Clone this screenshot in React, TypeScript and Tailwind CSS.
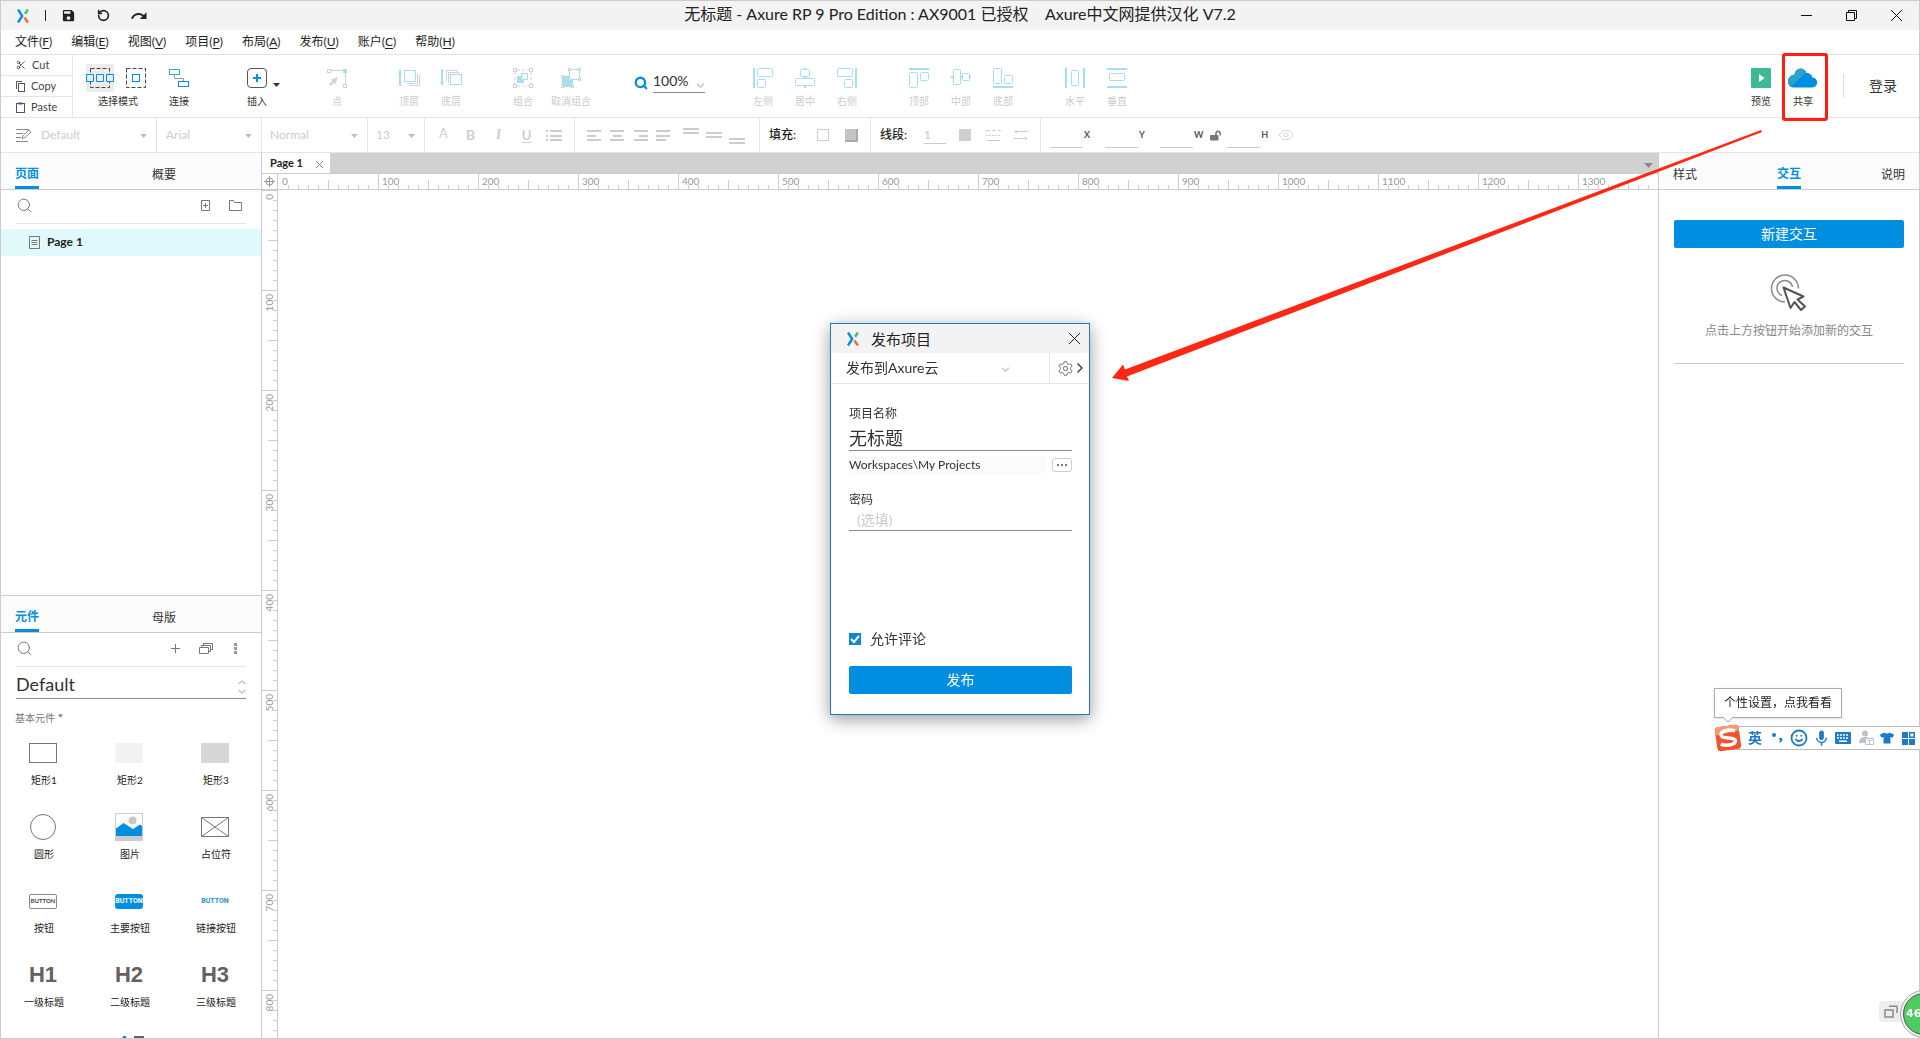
import React from "react";
import { Search, Scissors, RotateCcw, Settings, Smile, Eye } from "lucide-react";
import { MdSave, MdRedo, MdMic } from "react-icons/md";
import { FaLockOpen, FaTshirt } from "react-icons/fa";

const BLUE = "#008fe0";
const PALE = "#a8def2";
const GREY = "#d2d2d2";

function Logo({ className }: { className?: string }) {
  return (
    <svg width="12" height="14" viewBox="0 0 12 14" fill="none" className={className}>
      <path d="M1 .5 L5.2 7 L1 13.5" stroke={BLUE} strokeWidth="2.4" />
      <path d="M11 .5 L8 4.8" stroke="#4fc06a" strokeWidth="2.6" />
      <path d="M7.4 8.6 L11 13.5" stroke="#f0703c" strokeWidth="2.6" />
    </svg>
  );
}

function Caret({ className, color = "#bdbdbd" }: { className?: string; color?: string }) {
  return (
    <svg width="7" height="4" viewBox="0 0 7 4" className={className}>
      <path d="M0 0h7L3.5 4z" fill={color} />
    </svg>
  );
}

function Chevron({ className }: { className?: string }) {
  return (
    <svg width="9" height="5" viewBox="0 0 9 5" fill="none" className={className}>
      <path d="M1 .7 L4.5 4 L8 .7" stroke="#c4c4c4" strokeWidth="1.3" />
    </svg>
  );
}

function Icon20({ children, w = 20 }: { children: React.ReactNode; w?: number }) {
  return (
    <svg width={w} height="20" viewBox={`0 0 ${w} 20`} fill="none">
      {children}
    </svg>
  );
}

const icons = {
  connect: (
    <Icon20>
      <rect x=".5" y="1.5" width="10" height="5" stroke="#3ab0c8" />
      <rect x="9.5" y="13.5" width="10" height="5" stroke={BLUE} />
      <path d="M5.5 7v3.500h9V13" stroke="#999" />
    </Icon20>
  ),
  insert: (
    <Icon20>
      <rect x=".5" y=".5" width="19" height="19" rx="3.500" stroke="#555" />
      <path d="M10 6v8M6 10h8" stroke={BLUE} strokeWidth="2" />
    </Icon20>
  ),
  point: (
    <Icon20>
      <path d="M4 2.500H16M18.500 5v11" stroke={GREY} />
      <rect x=".5" y="1.500" width="3" height="3" stroke={GREY} />
      <rect x="16" y="1" width="4" height="4" fill={PALE} />
      <rect x="16.500" y="16.500" width="3" height="3" stroke={GREY} />
      <path d="M11 9L3 12l2.500 1L2 16.500 3.500 18 7 14.500l1 2.500z" fill={GREY} />
    </Icon20>
  ),
  front: (
    <Icon20 w={22}>
      <path d="M2 18V4" stroke={PALE} strokeWidth="2" />
      <path d="M0 5l2-4 2 4z" fill={PALE} />
      <rect x="6.500" y="2.500" width="11" height="11" stroke={PALE} />
      <path d="M19.500 5v10.500H9M21.500 7v10.500H11" stroke={GREY} />
    </Icon20>
  ),
  back: (
    <Icon20 w={22}>
      <path d="M2 1v14" stroke={PALE} strokeWidth="2" />
      <path d="M0 14l2 4 2-4z" fill={PALE} />
      <rect x="10.500" y="6.500" width="11" height="10" stroke={PALE} />
      <path d="M9 14.500H8.500V4.500H19V6M7 12.500H6.500V2.500H17V4" stroke={GREY} />
    </Icon20>
  ),
  group: (
    <Icon20>
      <path d="M4 2h12M4 18h12M2 4v12M18 4v12" stroke={GREY} strokeDasharray="3 2" />
      <rect x=".5" y=".5" width="3" height="3" stroke={GREY} />
      <rect x="16.500" y=".5" width="3" height="3" stroke={GREY} />
      <rect x=".5" y="16.500" width="3" height="3" stroke={GREY} />
      <rect x="16.500" y="16.500" width="3" height="3" stroke={GREY} />
      <rect x="4" y="8" width="7" height="7" fill={PALE} />
      <rect x="8.500" y="5.500" width="6" height="6" fill="#fff" stroke={PALE} />
    </Icon20>
  ),
  ungroup: (
    <Icon20>
      <rect x="1" y="8" width="11" height="11" fill={PALE} />
      <rect x="8.500" y="1.500" width="10" height="10" fill="#fff" stroke={PALE} />
      {[[7, 0], [17, 0], [17, 10], [7, 10], [0, 7], [0, 17], [10, 17]].map(([x, y]) => (
        <rect key={`${x}-${y}`} x={x + 0.5} y={y + 0.5} width="2" height="2" fill="#fff" stroke={GREY} />
      ))}
    </Icon20>
  ),
  left: (
    <Icon20>
      <path d="M1 0v20" stroke={PALE} strokeWidth="2" />
      <rect x="4.500" y=".5" width="15" height="8" rx="1" stroke={PALE} />
      <rect x="4.500" y="11.500" width="8" height="8" rx="1" stroke={PALE} />
    </Icon20>
  ),
  center: (
    <Icon20>
      <path d="M10 -1v3M10 8v3M10 18v2" stroke={PALE} strokeWidth="2" />
      <rect x="5.500" y="1.500" width="9" height="7" rx="1" stroke={PALE} />
      <rect x=".5" y="10.500" width="19" height="7" rx="1" stroke={PALE} />
    </Icon20>
  ),
  right: (
    <Icon20>
      <path d="M19 0v20" stroke={PALE} strokeWidth="2" />
      <rect x=".5" y=".5" width="15" height="8" rx="1" stroke={PALE} />
      <rect x="7.500" y="11.500" width="8" height="8" rx="1" stroke={PALE} />
    </Icon20>
  ),
  top: (
    <Icon20>
      <path d="M0 1h20" stroke={PALE} strokeWidth="2" />
      <rect x=".5" y="4.500" width="8" height="15" rx="1" stroke={PALE} />
      <rect x="11.500" y="4.500" width="8" height="8" rx="1" stroke={PALE} />
    </Icon20>
  ),
  middle: (
    <Icon20>
      <path d="M0 9h2M9 9h3M18 9h2" stroke={PALE} strokeWidth="2" />
      <rect x="2.500" y="1.500" width="7" height="15" rx="1" stroke={PALE} />
      <rect x="11.500" y="5.500" width="7" height="7" rx="1" stroke={PALE} />
    </Icon20>
  ),
  bottom: (
    <Icon20>
      <path d="M0 19h20" stroke={PALE} strokeWidth="2" />
      <rect x=".5" y=".5" width="8" height="15" rx="1" stroke={PALE} />
      <rect x="11.500" y="7.500" width="8" height="8" rx="1" stroke={PALE} />
    </Icon20>
  ),
  horizontal: (
    <Icon20>
      <path d="M1 0v20M19 0v20" stroke={PALE} strokeWidth="2" />
      <rect x="6.500" y="2.500" width="7" height="15" rx="1" stroke={PALE} />
    </Icon20>
  ),
  vertical: (
    <Icon20>
      <path d="M0 1h20M0 19h20" stroke={PALE} strokeWidth="2" />
      <rect x="2.500" y="5.500" width="15" height="7" rx="1" stroke={PALE} />
    </Icon20>
  ),
  preview: (
    <Icon20>
      <rect width="20" height="20" rx="1" fill="#3fb896" />
      <path d="M8 6v8l5.500-4z" fill="#fff" />
    </Icon20>
  ),
  share: (
    <Icon20 w={30}>
      <path
        d="M5 19.500a5.500 5.500 0 0 1-5-5.500A7 7 0 0 1 6.500 6.500 7 7 0 0 1 12.500.5a6.500 6.500 0 0 1 6 4.500c4 0 5.500 2.500 5.700 4.500a5 5 0 0 1 0 10z"
        fill={BLUE}
      />
      <path d="M3 18.500A6 6 0 0 1 0 13.500a7 7 0 0 1 6.500-7A7 7 0 0 1 12.500.5a6.500 6.500 0 0 1 5.500 4.200z" fill="#2ba3cb" />
    </Icon20>
  ),
};

function Tool({ icon, label, on, children, className = "w-[42px]" }: { icon: React.ReactNode; label: string; on?: boolean; children?: React.ReactNode; className?: string }) {
  return (
    <button className={`relative flex shrink-0 flex-col items-center pt-[13px] ${on ? "text-[#333]" : "text-[#ccc]"} ${className}`}>
      {icon}
      <span className="mt-[5px] text-[10px] leading-4 whitespace-nowrap">{label}</span>
      {children}
    </button>
  );
}

function TitleBar() {
  return (
    <header className="grid h-[29px] shrink-0 grid-cols-[1fr_auto_1fr] items-center bg-[#f3f3f3]">
      <div className="flex items-center pl-4 text-[#222]">
        <Logo />
        <span className="ml-4 h-[11px] w-px bg-[#222]" />
        <button aria-label="保存" className="ml-[15px]"><MdSave size={15} /></button>
        <button aria-label="撤销" className="ml-[21px]"><RotateCcw size={13} strokeWidth={3} /></button>
        <button aria-label="重做" className="ml-[20px]"><MdRedo size={18} /></button>
      </div>
      <h1 className="pb-1 text-[16px] leading-6 whitespace-pre text-[#222]">无标题 - Axure RP 9 Pro Edition : AX9001 已授权    Axure中文网提供汉化 V7.2</h1>
      <div className="flex justify-end text-[#111]">
        <button aria-label="最小化" className="flex h-7 w-[45px] items-center justify-center">
          <svg width="11" height="11"><path d="M0 5.500h11" stroke="currentColor" /></svg>
        </button>
        <button aria-label="还原" className="flex h-7 w-[45px] items-center justify-center">
          <svg width="11" height="11" fill="none" stroke="currentColor"><path d="M.5 2.500h8v8h-8zM2.500 2.500v-2h8v8h-2" /></svg>
        </button>
        <button aria-label="关闭" className="flex h-7 w-[45px] items-center justify-center">
          <svg width="11" height="11" stroke="currentColor"><path d="M0 0l11 11M11 0L0 11" /></svg>
        </button>
      </div>
    </header>
  );
}

const menus = [["文件", "F"], ["编辑", "E"], ["视图", "V"], ["项目", "P"], ["布局", "A"], ["发布", "U"], ["账户", "C"], ["帮助", "H"]];

function MenuBar() {
  return (
    <nav className="flex h-[25px] shrink-0 items-center gap-[19px] border-b border-[#e4e4e4] pl-[14px] text-[12px] leading-5 text-[#222]">
      {menus.map(([name, key]) => (
        <button key={key}>{name}(<u className="underline-offset-2">{key}</u>)</button>
      ))}
    </nav>
  );
}

function Toolbar() {
  const clip = "flex h-[21px] items-center gap-[6px] border-b border-[#e4e4e4] pl-[15px] last:border-b-0 last:h-5";
  return (
    <div className="flex h-[63px] shrink-0 border-b border-[#e4e4e4]">
      <div className="flex w-[72px] shrink-0 flex-col border-r border-[#e4e4e4] text-[11px] leading-4 text-[#444]">
        <button className={clip}><Scissors size={10} strokeWidth={2} />Cut</button>
        <button className={clip}>
          <svg width="9" height="11" fill="none" stroke="#555"><rect x="2.500" y="2.500" width="6" height="8" /><path d="M.5 8V.5H6" /></svg>
          Copy
        </button>
        <button className={clip}>
          <svg width="9" height="11" fill="none" stroke="#555"><rect x=".5" y="1.500" width="8" height="9" /><path d="M2.500 1.500h4" strokeWidth="2" /></svg>
          Paste
        </button>
      </div>
      <div className="ml-3 flex w-[66px] shrink-0 flex-col items-center pt-[9px] text-[#333]">
        <div className="flex gap-2">
          <button aria-label="相交选择" className="flex size-7 items-center justify-center bg-[#ececec]">
            <svg width="28" height="20" fill="none">
              <rect x="4.500" y=".5" width="19" height="19" stroke="#444" strokeDasharray="4 2" />
              <path d="M.5 6.500h7v7h-7zM10.500 6.500h7v7h-7zM20.500 6.500h7v7h-7z" fill="#ececec" stroke={BLUE} />
            </svg>
          </button>
          <button aria-label="包含选择" className="flex size-7 items-center justify-center">
            <svg width="20" height="20" fill="none">
              <rect x=".5" y=".5" width="19" height="19" stroke="#444" strokeDasharray="4 2" />
              <rect x="6.500" y="6.500" width="7" height="7" stroke={BLUE} />
            </svg>
          </button>
        </div>
        <span className="mt-px text-[10px] leading-4">选择模式</span>
      </div>
      <Tool icon={icons.connect} label="连接" on className="ml-[7px] w-[42px]" />
      <Tool icon={icons.insert} label="插入" on className="ml-9 w-[42px]">
        <Caret color="#333" className="absolute top-7 right-[-2px]" />
      </Tool>
      <Tool icon={icons.point} label="点" className="ml-[38px] w-[42px]" />
      <div className="ml-[30px] flex"><Tool icon={icons.front} label="顶层" /><Tool icon={icons.back} label="底层" /></div>
      <div className="ml-[27px] flex">
        <Tool icon={icons.group} label="组合" className="w-12" />
        <Tool icon={icons.ungroup} label="取消组合" className="w-12" />
      </div>
      <label className="ml-[39px] flex h-[38px] items-end gap-[5px]">
        <Search size={14} strokeWidth={4} color={BLUE} className="mb-[3px]" />
        <span className="relative flex border-b border-[#888]">
          <input aria-label="缩放" defaultValue="100%" className="w-[52px] bg-transparent text-[14px] leading-[22px] text-[#333] outline-none" />
          <Chevron className="absolute right-0 bottom-1" />
        </span>
      </label>
      <div className="ml-[37px] flex"><Tool icon={icons.left} label="左侧" /><Tool icon={icons.center} label="居中" /><Tool icon={icons.right} label="右侧" /></div>
      <div className="ml-[30px] flex"><Tool icon={icons.top} label="顶部" /><Tool icon={icons.middle} label="中部" /><Tool icon={icons.bottom} label="底部" /></div>
      <div className="ml-[30px] flex"><Tool icon={icons.horizontal} label="水平" /><Tool icon={icons.vertical} label="垂直" /></div>
      <div className="ml-auto flex">
        <Tool icon={icons.preview} label="预览" on />
        <Tool icon={icons.share} label="共享" on>
          <span className="absolute -top-[2px] left-0 h-[68px] w-[46px] rounded-[3px] border-3 border-[#ff1e10]" />
        </Tool>
        <span className="mt-[19px] ml-[19px] h-6 w-px bg-[#ddd]" />
        <button className="mr-[22px] ml-[25px] pb-px text-[14px] leading-5 text-[#333]">登录</button>
      </div>
    </div>
  );
}

function StyleSelect({ label, value, className }: { label: string; value: string; className: string }) {
  return (
    <div className={`relative flex shrink-0 items-center border-r border-[#e4e4e4] ${className}`}>
      <select aria-label={label} className="w-full appearance-none bg-transparent text-[12px] leading-5 text-[#ccc] outline-none">
        <option>{value}</option>
      </select>
      <Caret className="pointer-events-none absolute top-4 right-[9px]" />
    </div>
  );
}

function Lines({ rows, h = 11, w = 14 }: { rows: number[][]; h?: number; w?: number }) {
  return (
    <svg width={w} height={h} shapeRendering="crispEdges">
      {rows.map(([x, y, len]) => (
        <rect key={y} x={x} y={y} width={len} height="1.500" fill="#ccc" />
      ))}
    </svg>
  );
}

function Coord({ name }: { name: string }) {
  return (
    <label className="flex items-center text-[9px] leading-4 font-bold text-[#555]">
      <input className="mt-2 h-[18px] w-[33px] border-b border-[#ccc] bg-transparent outline-none" />
      <span className="ml-px">{name}</span>
    </label>
  );
}

function FormatBar() {
  return (
    <div className="flex h-[35px] shrink-0 border-b border-[#e4e4e4]">
      <svg width="16" height="14" fill="none" stroke="#8a8a8a" className="mt-[10px] ml-[15px] shrink-0">
        <path d="M0 1.500h13M0 5.500h7M0 9.500h5M0 13.500h12M6 10.500l1-3L13 2l2 2-6 5.500z" />
      </svg>
      <StyleSelect label="样式" value="Default" className="w-[125px] pl-[9px]" />
      <StyleSelect label="字体" value="Arial" className="w-[105px] pl-[9px]" />
      <StyleSelect label="字形" value="Normal" className="w-[106px] pl-2" />
      <StyleSelect label="字号" value="13" className="w-[57px] pl-2" />
      <div className="flex w-[150px] shrink-0 items-center border-r border-[#e4e4e4] pl-[13px] text-[14px] leading-5 text-[#d0d0d0]">
        <button className="mb-1 w-[11px] text-[13px]">A</button>
        <button className="ml-4 w-[11px] font-bold">B</button>
        <button className="ml-[17px] w-[11px] font-serif font-bold italic">I</button>
        <button className="ml-[17px] w-[11px] text-[13px] font-bold underline underline-offset-2">U</button>
        <button aria-label="项目符号" className="ml-[14px]">
          <Lines w={16} rows={[[0, 0, 2], [0, 5, 2], [0, 9, 2]]} />
        </button>
        <span className="-ml-3"><Lines w={12} rows={[[0, 0, 12], [0, 5, 12], [0, 9, 12]]} /></span>
      </div>
      <div className="flex w-[185px] shrink-0 items-center border-r border-[#e4e4e4] pl-3">
        <button aria-label="左对齐"><Lines rows={[[0, 0, 14], [0, 5, 9], [0, 9, 14]]} /></button>
        <button aria-label="居中对齐" className="ml-[9px]"><Lines rows={[[0, 0, 14], [3, 5, 9], [0, 9, 14]]} /></button>
        <button aria-label="右对齐" className="ml-[10px]"><Lines rows={[[0, 0, 14], [5, 5, 9], [0, 9, 14]]} /></button>
        <button aria-label="两端对齐" className="ml-2"><Lines rows={[[0, 0, 14], [0, 5, 14], [0, 9, 10]]} /></button>
        <button aria-label="顶端" className="mb-2 ml-[13px]"><Lines w={16} h={6} rows={[[0, 0, 16], [0, 4, 16]]} /></button>
        <button aria-label="中间" className="ml-[7px]"><Lines w={16} h={6} rows={[[0, 0, 16], [0, 4, 16]]} /></button>
        <button aria-label="底端" className="mt-3 ml-[7px]"><Lines w={16} h={6} rows={[[0, 0, 16], [0, 4, 16]]} /></button>
      </div>
      <div className="flex w-[111px] shrink-0 items-center border-r border-[#e4e4e4] pl-[9px] text-[12px] leading-5 font-medium text-[#222]">
        <span className="w-12 whitespace-nowrap">填充:</span>
        <button aria-label="填充颜色" className="size-3 border border-[#ccc]" />
        <button aria-label="阴影" className="ml-4 size-[13px] border-r-2 border-b-2 border-[#aaa] bg-[#c4c4c4]" />
      </div>
      <div className="flex w-[170px] shrink-0 items-center border-r border-[#e4e4e4] pl-[9px] text-[12px] leading-5 font-medium text-[#222]">
        <label htmlFor="line-width" className="w-11 whitespace-nowrap">线段:</label>
        <input id="line-width" defaultValue="1" className="w-[22px] border-b border-[#ccc] bg-transparent leading-[16px] text-[#ccc] outline-none" />
        <button aria-label="线段颜色" className="ml-[13px] size-3 bg-[#cfcfcf]" />
        <svg width="15" height="11" stroke="#ccc" className="ml-[15px]"><path d="M0 .5h15" strokeDasharray="4 2" /><path d="M0 5.500h15" strokeDasharray="2 1" /><path d="M1 10.500h13" /></svg>
        <svg width="14" height="12" fill="none" stroke="#ccc" className="ml-[13px]"><path d="M14 2.500H1M3 .5L1 2.500l2 2M0 9.500h13M11 7.500l2 2-2 2" /></svg>
      </div>
      <div className="flex items-center pl-[9px]">
        <Coord name="X" />
        <span className="w-[15px]" />
        <Coord name="Y" />
        <span className="w-[15px]" />
        <Coord name="W" />
        <button aria-label="锁定比例" className="ml-[7px] text-[#777]"><FaLockOpen size={11} /></button>
        <span className="w-[6px]" />
        <Coord name="H" />
        <button aria-label="可见性" className="ml-[10px]"><Eye size={16} strokeWidth={1.5} color="#d8d8d8" /></button>
      </div>
    </div>
  );
}

function PanelTabs({ tabs, active, className }: { tabs: string[]; active: number; className: string }) {
  return (
    <div role="tablist" className={`flex h-[37px] shrink-0 border-b border-[#ccc] bg-[#fcfcfc] px-[14px] text-[12px] leading-5 ${className}`}>
      {tabs.map((t, i) => (
        <button
          key={t}
          role="tab"
          aria-selected={i === active}
          className={i === active ? "flex h-9 flex-col border-b-3 border-[#008fe0] pt-[11px] font-bold text-[#008fe0]" : "h-9 pt-[7px] text-[#333]"}
        >
          {t}
        </button>
      ))}
    </div>
  );
}

function LensInput({ label, children }: { label: string; children: React.ReactNode }) {
  return (
    <div className="mx-[15px] flex h-[34px] shrink-0 items-center border-b border-[#e4e4e4] pb-[2px]">
      <Search size={17} strokeWidth={1.4} color="#777" />
      <input aria-label={label} className="min-w-0 flex-1 bg-transparent px-1 text-[12px] outline-none" />
      {children}
    </div>
  );
}

const widgets: { name: string; art: React.ReactNode }[] = [
  { name: "矩形1", art: <span className="h-5 w-7 border border-[#777]" /> },
  { name: "矩形2", art: <span className="h-5 w-7 bg-[#f2f2f2]" /> },
  { name: "矩形3", art: <span className="h-5 w-7 bg-[#d7d7d7]" /> },
  { name: "圆形", art: <span className="size-[26px] rounded-full border border-[#777]" /> },
  {
    name: "图片",
    art: (
      <svg width="28" height="28">
        <rect x=".5" y=".5" width="27" height="27" fill="#fff" stroke="#ccc" />
        <circle cx="17.500" cy="7.500" r="4" fill="#c8c8c8" />
        <path d="M1 15.500L8.500 10l9.500 6 7-4.500 2 1.500v10H1z" fill={BLUE} />
        <path d="M1 23h26v4H1z" fill="#ccc" />
      </svg>
    ),
  },
  {
    name: "占位符",
    art: (
      <svg width="28" height="20" fill="none" stroke="#777"><path d="M.5.5h27v19H.5zM.5.5l27 19M27.500.5L.5 19.500" /></svg>
    ),
  },
  { name: "按钮", art: <span className="flex h-[15px] w-7 items-center justify-center rounded-[2px] border border-[#888] text-[6px] leading-3 font-bold text-[#444]">BUTTON</span> },
  { name: "主要按钮", art: <span className="flex h-[15px] w-7 items-center justify-center rounded-[3px] bg-[#008fe0] font-[Roboto] text-[7px] leading-3 font-bold text-white">BUTTON</span> },
  { name: "链接按钮", art: <span className="font-[Roboto] text-[7px] leading-3 font-bold text-[#1b90d0]">BUTTON</span> },
  { name: "一级标题", art: <span className="font-['Liberation_Sans'] text-[22px] leading-7 font-bold text-[#666060]">H1</span> },
  { name: "二级标题", art: <span className="font-['Liberation_Sans'] text-[22px] leading-7 font-bold text-[#666060]">H2</span> },
  { name: "三级标题", art: <span className="font-['Liberation_Sans'] text-[22px] leading-7 font-bold text-[#666060]">H3</span> },
];

function LeftPanel() {
  return (
    <aside className="flex w-[261px] shrink-0 flex-col border-r border-[#ccc]">
      <section className="flex h-[442px] shrink-0 flex-col">
        <PanelTabs tabs={["页面", "概要"]} active={0} className="gap-[113px]" />
        <LensInput label="搜索页面">
          <button aria-label="添加页面" className="mr-[19px]">
            <svg width="9" height="11" fill="none" stroke="#777"><path d="M.5.5h8v10h-8zM2 5.500h5M4.500 3v5" /></svg>
          </button>
          <button aria-label="添加文件夹" className="mr-1">
            <svg width="13" height="11" fill="none" stroke="#777"><path d="M.5.500h4l1 2h7v8H.5z" /></svg>
          </button>
        </LensInput>
        <button className="mt-[5px] flex h-[27px] items-center bg-[#e0fafc] pb-px pl-7 text-[12px] leading-5 font-bold text-[#222]">
          <svg width="11" height="13" fill="none" stroke="#777" className="mr-[7px]"><path d="M.5.5h10v12H.5zM2.500 4.500h6M2.500 6.500h6M2.500 8.500h6" /></svg>
          Page 1
        </button>
      </section>
      <section className="flex min-h-0 flex-1 flex-col overflow-hidden border-t border-[#ccc]">
        <PanelTabs tabs={["元件", "母版"]} active={0} className="gap-[113px]" />
        <LensInput label="搜索元件">
          <button aria-label="添加库" className="mr-[19px]">
            <svg width="9" height="9" stroke="#777"><path d="M0 4.500h9M4.500 0v9" /></svg>
          </button>
          <button aria-label="元件库" className="mr-[21px]">
            <svg width="14" height="11" fill="none" stroke="#777"><path d="M.5 4.500h9v6h-9zM2.500 4.500v-2h9v6h-2M4.500 2.500v-2h9v6h-2" /></svg>
          </button>
          <button aria-label="更多" className="mr-[9px]">
            <svg width="3" height="11" fill="#999"><path d="M0 0h3v3H0zM0 4h3v3H0zM0 8h3v3H0z" /></svg>
          </button>
        </LensInput>
        <div className="relative mx-[15px] flex h-8 shrink-0 items-center border-b border-[#888]">
          <select aria-label="元件库选择" className="w-full appearance-none bg-transparent pt-[3px] text-[18px] leading-7 text-[#333] outline-none">
            <option>Default</option>
          </select>
          <svg width="8" height="14" fill="none" stroke="#c0c0c0" strokeWidth="1.300" className="pointer-events-none absolute right-0 bottom-1"><path d="M.5 4L4 1l3.500 3M.5 10L4 13l3.500-3" /></svg>
        </div>
        <button className="mt-[11px] ml-[14px] flex shrink-0 gap-[3px] text-[10px] leading-4 text-[#777]">
          基本元件
          <Caret color="#777" className="mt-1 w-[5px]" />
        </button>
        <div className="mt-[13px] grid w-[258px] shrink-0 grid-cols-3">
          {widgets.map((w) => (
            <div key={w.name} className="flex h-[74px] flex-col items-center">
              <span className="mr-[2px] flex h-7 items-center">{w.art}</span>
              <span className="mt-[5px] text-[10px] leading-4 text-[#222]">{w.name}</span>
            </div>
          ))}
          <div className="col-start-2 flex h-[74px] justify-center">
            <svg width="28" height="28"><path d="M0 28L7 1h3l7 27z" fill={BLUE} /><path d="M18 1h10v4H18z" fill="#666060" /></svg>
          </div>
        </div>
      </section>
    </aside>
  );
}

function useWindowSize() {
  const read = () => ({ w: window.innerWidth, h: window.innerHeight });
  const [size, setSize] = React.useState(read);
  React.useEffect(() => {
    const onResize = () => setSize(read());
    window.addEventListener("resize", onResize);
    return () => window.removeEventListener("resize", onResize);
  }, []);
  return size;
}

function RulerX({ count }: { count: number }) {
  return (
    <div className="flex min-w-0 flex-1 overflow-hidden">
      {Array.from({ length: count }, (_, s) => (
        <div key={s} className="relative flex w-[100px] shrink-0 items-end">
          {Array.from({ length: 10 }, (_, i) => (
            <span key={i} className={`w-[10px] border-l border-[#ccc] ${i === 0 ? (s === 0 ? "h-0" : "h-[15px]") : i === 5 ? "h-[9px]" : "h-1"}`} />
          ))}
          <span className="absolute top-px left-1 text-[10px] leading-3 text-[#999]">{s * 100}</span>
        </div>
      ))}
    </div>
  );
}

function RulerY({ count }: { count: number }) {
  return (
    <div className="flex w-4 shrink-0 flex-col overflow-hidden border-r border-[#ccc]">
      {Array.from({ length: count }, (_, s) => (
        <div key={s} className="relative flex h-[100px] shrink-0 flex-col items-end">
          {Array.from({ length: 10 }, (_, i) => (
            <span key={i} className={`h-[10px] border-t border-[#ccc] ${i === 0 ? "w-[15px]" : i === 5 ? "w-[9px]" : "w-1"}`} />
          ))}
          <span className="absolute top-1 left-px rotate-180 text-[10px] leading-3 text-[#999] [writing-mode:vertical-rl]">{s * 100}</span>
        </div>
      ))}
    </div>
  );
}

function Canvas() {
  const { w, h } = useWindowSize();
  return (
    <main className="flex min-w-0 flex-1 flex-col">
      <div className="flex h-[21px] shrink-0 items-start justify-between border-b border-[#ccc] bg-[#d1d1d1]">
        <div className="flex h-5 w-[68px] items-center bg-white pb-px pl-2 text-[11px] leading-4 font-bold text-[#222]">
          Page 1
          <button aria-label="关闭页面" className="mt-[3px] ml-[13px]">
            <svg width="7" height="7" stroke="#888"><path d="M0 0l7 7M7 0L0 7" /></svg>
          </button>
        </div>
        <button aria-label="页面列表" className="mt-[10px] mr-[5px]">
          <svg width="9" height="5" className="block"><path d="M0 0h9L4.500 5z" fill="#888" /></svg>
        </button>
      </div>
      <div className="flex h-4 shrink-0 border-b border-[#ccc]">
        <span className="flex w-4 shrink-0 items-center justify-center border-r border-[#ccc]">
          <svg width="11" height="11" fill="none" stroke="#999"><circle cx="5.500" cy="5.500" r="3.500" /><path d="M0 5.500h11M5.500 0v11" /></svg>
        </span>
        <RulerX count={Math.ceil((w - 540) / 100)} />
      </div>
      <div className="flex min-h-0 flex-1">
        <RulerY count={Math.ceil((h - 191) / 100)} />
        <div className="flex-1 bg-white" />
      </div>
    </main>
  );
}

function RightPanel() {
  return (
    <aside className="flex w-[261px] shrink-0 flex-col border-l border-[#ccc]">
      <PanelTabs tabs={["样式", "交互", "说明"]} active={1} className="justify-between" />
      <div className="mx-[15px] mt-[30px] flex flex-col items-center border-b border-[#ccc] pb-[22px]">
        <button className="h-7 w-full rounded-[2px] bg-[#008fe0] text-[14px] leading-7 text-white">新建交互</button>
        <svg width="38" height="38" fill="none" className="mt-[26px]">
          <path d="M15 28A13.500 13.500 0 1 1 28.500 14.500" stroke="#8a8a8a" strokeWidth="1.500" />
          <path d="M12 21.500A7.800 7.800 0 1 1 22.500 13" stroke="#8a8a8a" strokeWidth="1.500" />
          <path d="M13.500 13.500l7 20.500 4-6 6.500 8 4-3.500-7.500-7 6-3z" fill="#fff" stroke="#5a5252" strokeWidth="2" strokeLinejoin="round" />
        </svg>
        <p className="mt-[9px] text-[12px] leading-5 text-[#888]">点击上方按钮开始添加新的交互</p>
      </div>
    </aside>
  );
}

function PublishDialog() {
  return (
    <div className="pointer-events-none fixed inset-x-0 top-0 bottom-px flex items-center justify-center">
      <div role="dialog" aria-label="发布项目" className="pointer-events-auto flex h-[392px] w-[260px] flex-col border border-[#1979ca] bg-white text-[#333] shadow-[0_4px_16px_rgba(0,0,0,0.4)]">
        <div className="flex h-[29px] shrink-0 items-center bg-[#f3f3f3] pl-4">
          <Logo />
          <h2 className="ml-[12px] flex-1 text-[15px] leading-7 text-[#222]">发布项目</h2>
          <button aria-label="关闭对话框" className="mr-[9px]">
            <svg width="11" height="11" stroke="#222"><path d="M0 0l11 11M11 0L0 11" /></svg>
          </button>
        </div>
        <div className="flex h-[31px] shrink-0 border-b border-[#e4e4e4]">
          <div className="relative flex flex-1 items-center border-r border-[#e4e4e4] pl-[15px]">
            <select aria-label="发布目标" className="w-full appearance-none bg-transparent text-[14px] leading-6 outline-none">
              <option>发布到Axure云</option>
            </select>
            <Chevron className="pointer-events-none absolute top-[14px] right-[39px]" />
          </div>
          <button aria-label="设置" className="flex w-[39px] items-center gap-[3px] pl-[7px]">
            <Settings size={17} strokeWidth={1.400} color="#666" />
            <svg width="6" height="10" fill="none" stroke="#333" strokeWidth="1.300"><path d="M.5.5L5 5 .5 9.500" /></svg>
          </button>
        </div>
        <form className="flex flex-1 flex-col pr-[17px] pb-5 pl-[18px]" onSubmit={(e) => e.preventDefault()}>
          <label htmlFor="project" className="mt-5 text-[12px] leading-5">项目名称</label>
          <input id="project" defaultValue="无标题" className="h-[27px] w-full border-b border-[#888] bg-transparent text-[18px] leading-6 outline-none" />
          <div className="mt-[5px] flex h-[18px] items-center justify-between text-[12px] leading-[18px]">
            <span className="w-[196px] bg-[#fbfbfb]">Workspaces\My Projects</span>
            <button aria-label="选择位置" className="flex h-[14px] w-5 items-center justify-center gap-[2px] rounded-[3px] border border-[#ccc]">
              <i className="size-[2px] bg-[#777]" /><i className="size-[2px] bg-[#777]" /><i className="size-[2px] bg-[#777]" />
            </button>
          </div>
          <label htmlFor="password" className="mt-4 text-[12px] leading-5">密码</label>
          <input id="password" placeholder="(选填)" className="h-[21px] w-full border-b border-[#888] bg-transparent pb-px pl-2 text-[14px] leading-5 outline-none placeholder:text-[#ccc]" />
          <label className="mt-auto flex items-center gap-[9px] text-[14px] leading-5">
            <span className="relative flex">
              <input type="checkbox" defaultChecked className="size-3 appearance-none bg-[#0d86cf]" />
              <svg width="12" height="12" fill="none" className="pointer-events-none absolute inset-0"><path d="M2 6l3 3 5-6" stroke="#fff" strokeWidth="2" /></svg>
            </span>
            允许评论
          </label>
          <button className="mt-[17px] h-7 shrink-0 rounded-[2px] bg-[#008fe0] text-[14px] leading-7 text-white">发布</button>
        </form>
      </div>
    </div>
  );
}

function ImeBar() {
  return (
    <div className="fixed top-[688px] right-0 flex w-[206px] flex-col text-[#1f78c8]">
      <div className="relative flex h-[30px] w-32 items-center justify-center border border-[#aaa] bg-white text-[12px] leading-5 text-[#222] shadow-sm">
        个性设置，点我看看
        <svg width="10" height="6" className="absolute -bottom-[6px] left-2"><path d="M0 0l5 5 5-5" fill="#fff" stroke="#aaa" /></svg>
      </div>
      <div className="mt-2 ml-3 flex h-6 items-center border-y border-[#bbb] bg-white">
        <svg width="28" height="28" className="-ml-3 shrink-0">
          <g transform="rotate(-8 14 14)">
            <rect x="2" y="2" width="24" height="24" rx="3" fill="#f0522e" />
            <path d="M2 10V5a3 3 0 0 1 3-3h18a3 3 0 0 1 3 3v3z" fill="#f59a76" />
            <path d="M22 8C16 5 7 6 7.500 10.500S21 13 21 17.500 11 22 6 19" fill="none" stroke="#fff" strokeWidth="3.500" />
          </g>
        </svg>
        <button className="ml-[6px] text-[14px] leading-5 font-bold">英</button>
        <svg width="11" height="12" className="ml-[10px]"><circle cx="2" cy="3" r="2" fill="currentColor" /><path d="M7 6h3c1 2 0 4-3 5 1-2 1-3 0-5z" fill="currentColor" /></svg>
        <Smile size={18} strokeWidth={2.4} className="ml-[7px] shrink-0" />
        <MdMic size={19} className="ml-1 shrink-0" />
        <svg width="16" height="12" className="ml-1 shrink-0">
          <rect width="16" height="12" rx="1" fill="currentColor" />
          <path d="M2 3h12M2 6h12" stroke="#fff" strokeWidth="1.500" strokeDasharray="2 1" />
          <path d="M4 9.200h8" stroke="#fff" strokeWidth="1.500" />
        </svg>
        <svg width="16" height="16" className="ml-2 shrink-0" fill="#b8c4cc">
          <circle cx="6" cy="3.500" r="3" />
          <path d="M0 13c0-4 3-6 6-6s4 1 5 2H7v4z" />
          <path d="M6.500 8.500h8v6h-8zM8.500 10.500h4M10.500 10.500v4" fill="#fff" stroke="#b8c4cc" />
        </svg>
        <FaTshirt size={14} className="ml-[5px] shrink-0" />
        <svg width="13" height="13" className="ml-2 shrink-0" fill="currentColor">
          <path d="M0 0h6v6H0zM0 7h6v6H0zM7 7h6v6H7z" />
          <path d="M7.800.8h4.400v4.400H7.800z" fill="none" stroke="currentColor" strokeWidth="1.500" />
        </svg>
      </div>
    </div>
  );
}

function FloatingBadge() {
  return (
    <div className="fixed right-0 bottom-0 flex h-[50px] w-[41px] items-center overflow-hidden">
      <button aria-label="还原面板" className="mb-[6px] flex h-[21px] w-6 shrink-0 items-center justify-center rounded-[3px] bg-[#ededed]">
        <svg width="14" height="13" fill="none" stroke="#888" strokeWidth="1.500"><path d="M1 5h8v7H1zM5 1.200h8V8" /></svg>
      </button>
      <span className="-ml-[3px] flex size-12 shrink-0 items-center rounded-full border border-[#aaa] bg-[#eee] p-[2px]">
        <span className="flex size-full items-center rounded-full border border-[#555] bg-[#4fcb63] pl-[2px] font-['DejaVu_Sans'] text-[11px] leading-4 font-bold text-white">46</span>
      </span>
    </div>
  );
}

export default function App() {
  return (
    <div className="flex h-screen flex-col overflow-hidden border border-[#ccc] bg-white font-[Lato,'Noto_Sans_CJK_SC',sans-serif]">
      <TitleBar />
      <MenuBar />
      <Toolbar />
      <FormatBar />
      <div className="flex min-h-0 flex-1">
        <LeftPanel />
        <Canvas />
        <RightPanel />
      </div>
      <svg width="654" height="254" className="pointer-events-none fixed top-[129px] right-[157px]">
        <path d="M652 1L653 3 18 247.500l2 4.500L3 249l11-13.500 2 5z" fill="#ff2814" />
      </svg>
      <PublishDialog />
      <ImeBar />
      <FloatingBadge />
    </div>
  );
}
